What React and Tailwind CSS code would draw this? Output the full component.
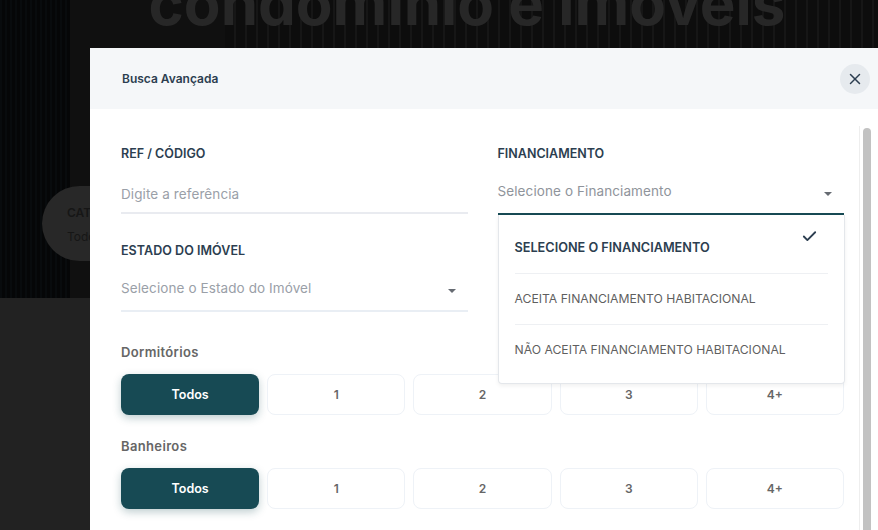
import { X, Check } from 'lucide-react';

const options = ['Todos', '1', '2', '3', '4+'];

function Caret() {
    return <span className="block w-0 h-0 border-x-[4px] border-x-transparent border-t-[4px] border-t-[#666b72]" />;
}

function OptionRow({ title, top }) {
    return (
        <div className={top}>
            <p className="text-[13px] tracking-[0.35px] leading-5 font-semibold text-[#666666]">{title}</p>
            <div className="mt-3 grid grid-cols-5 gap-2">
                {options.map((opt, i) => (
                    <button
                        key={opt}
                        className={i === 0
                            ? 'h-[41px] pt-px rounded-lg bg-[#174a54] text-white text-[12.5px] font-semibold shadow-[0_3px_8px_rgba(23,74,84,0.28)]'
                            : 'h-[41px] rounded-lg bg-white border border-[#eef2f7] text-[#666666] text-[12px] font-semibold'}
                    >
                        {opt}
                    </button>
                ))}
            </div>
        </div>
    );
}

export default function App() {
    return (
        <div className="relative w-[878px] h-[530px] overflow-hidden bg-[#222222] font-['Inter',sans-serif]">
            {/* page behind the modal */}
            <div className="relative h-[298px] overflow-hidden bg-[#0c0c0c] flex">
                <div className="w-[70px] bg-[repeating-linear-gradient(90deg,#080b0d_0px,#080b0d_2px,#050607_2px,#050607_5px)]" />
                <div className="w-[155px] bg-[#101010]" />
                <div className="flex-1 bg-[repeating-linear-gradient(90deg,#0d0d0d_0px,#0d0d0d_9px,#161616_9px,#161616_11px)]" />
                <div className="absolute inset-x-0 -top-[37px] pl-[56px] text-center text-[60px] leading-[80px] font-bold text-[#272727] whitespace-nowrap">
                    condomínio e imóveis
                </div>
                <div className="absolute left-[42px] top-[186px] w-[120px] h-[75px] rounded-full bg-[#282828] pl-[25px] pt-[19px]">
                    <p className="text-[12px] leading-4 font-semibold text-[#161616]">CAT</p>
                    <p className="mt-[8px] text-[12px] leading-4 text-[#161616]">Todos</p>
                </div>
            </div>

            {/* modal */}
            <div className="absolute left-[90px] top-[48px] w-[788px] h-[482px] bg-white rounded-tl-md flex flex-col">
                <div className="h-[61px] shrink-0 bg-[#f5f7f9] flex items-center justify-between pl-[32px] pr-[8px]">
                    <h2 className="text-[12px] font-semibold text-[#2c3e50]">Busca Avançada</h2>
                    <button className="w-[30px] h-[30px] rounded-full bg-[#e6eaee] flex items-center justify-center text-[#2c3e50]">
                        <X size={18} strokeWidth={2} />
                    </button>
                </div>
                <div className="flex-1 flex min-h-0">
                    <div className="w-[769px] shrink-0 pl-[31px] pr-[15px] pt-[35px]">
                        <div className="grid grid-cols-2 gap-x-[30px]">
                            <div>
                                <p className="text-[12.5px] leading-5 font-semibold text-[#2c3e50]">REF / CÓDIGO</p>
                                <div className="h-[50px] border-b-2 border-[#e9ebf0] pt-[20px] text-[13.5px] tracking-[0.1px] leading-5 text-[#9aa0a8]">
                                    Digite a referência
                                </div>
                                <p className="mt-[27px] text-[12.5px] tracking-[0.05px] leading-5 font-semibold text-[#2c3e50]">ESTADO DO IMÓVEL</p>
                                <div className="h-[51px] border-b-2 border-[#e9eef4] pt-[17px] pr-[12px] flex justify-between text-[13.5px] tracking-[0.1px] leading-5 text-[#9aa0a8]">
                                    <span>Selecione o Estado do Imóvel</span>
                                    <span className="pt-[11px]"><Caret /></span>
                                </div>
                            </div>
                            <div className="relative">
                                <p className="text-[12.5px] leading-5 font-semibold text-[#2c3e50]">FINANCIAMENTO</p>
                                <div className="h-[51px] border-b-2 border-[#174a54] pt-[17px] pr-[12px] flex justify-between text-[13.5px] tracking-[0.1px] leading-5 text-[#8f949b]">
                                    <span>Selecione o Financiamento</span>
                                    <span className="pt-[11px]"><Caret /></span>
                                </div>
                                {/* open dropdown */}
                                <div className="absolute z-10 left-0 top-[71px] w-[347px] h-[169px] bg-white border border-t-0 border-[#e4e7eb] rounded-b shadow-[0_2px_4px_rgba(0,0,0,0.06)] px-4">
                                    <div className="relative h-[59px] border-b border-[#eef0f3] pt-[23px] text-[12.7px] leading-5 font-semibold text-[#2c3e50]">
                                        SELECIONE O FINANCIAMENTO
                                        <Check size={17} strokeWidth={2.6} className="absolute right-[10px] top-[13px] text-[#2c3e50]" />
                                    </div>
                                    <div className="h-[51px] border-b border-[#eef0f3] pt-[15px] text-[12.2px] leading-5 text-[#5f5f5f]">ACEITA FINANCIAMENTO HABITACIONAL</div>
                                    <div className="pt-[15px] text-[12.2px] leading-5 text-[#5f5f5f]">NÃO ACEITA FINANCIAMENTO HABITACIONAL</div>
                                </div>
                            </div>
                        </div>
                        <OptionRow title="Dormitórios" top="mt-[30px]" />
                        <OptionRow title="Banheiros" top="mt-[21px]" />
                    </div>
                    {/* scrollbar */}
                    <div className="pt-[17px] w-[13px] h-full">
                        <div className="h-full border-l border-[#eeeeee] pl-[3px] pt-[2px]">
                            <div className="w-[8px] h-full rounded-t-full bg-[#c2c2c2]" />
                        </div>
                    </div>
                </div>
            </div>
        </div>
    );
}
